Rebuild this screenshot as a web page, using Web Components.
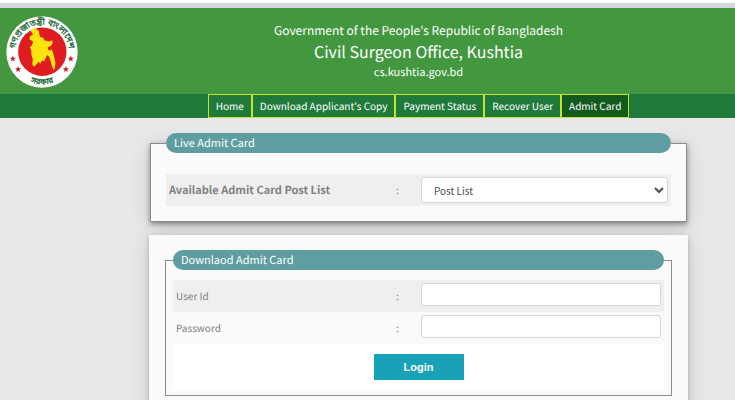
<!DOCTYPE html>
<html lang="en">
<head>
<meta charset="utf-8">
<meta name="viewport" content="width=device-width, initial-scale=1">
<title>Civil Surgeon Office, Kushtia</title>
<style>
  body {
    margin: 0;
    background: #e8e8e8;
    color: #808080;
    font-family: "Noto Sans CJK SC", "Open Sans", sans-serif;
    font-size: 10px;
    line-height: 16px;
    text-rendering: geometricPrecision;
  }
</style>
</head>
<body>

<site-header>
  <govt-logo slot="logo"></govt-logo>
  <span slot="govt">Government of the People's Republic of Bangladesh</span>
  <span slot="office">Civil Surgeon Office, Kushtia</span>
  <span slot="site">cs.kushtia.gov.bd</span>
</site-header>

<site-menu>
  <a href="#home">Home</a>
  <a href="#applicant-copy">Download Applicant's Copy</a>
  <a href="#payment">Payment Status</a>
  <a href="#recover">Recover User</a>
  <a href="#admit" class="active">Admit Card</a>
</site-menu>

<admit-page></admit-page>

<script>
class GovtLogo extends HTMLElement {
  constructor() {
    super();
    this.attachShadow({ mode: "open" });
    this.shadowRoot.innerHTML = `
  <style>
    :host { display: block; width: 72px; height: 72px; }
    svg { display: block; width: 100%; height: 100%; }
    text {
      font-family: "Noto Sans Bengali", "Lohit Bengali", "Noto Sans", sans-serif;
      font-size: 27px;
      fill: #1f6b3a;
      stroke: #1f6b3a;
      stroke-width: 1px;
    }
    .bottom { font-size: 25px; }
  </style>
  <svg viewBox="0 0 220 220" role="img" aria-label="Government seal">
    <defs>
      <path id="arc-top" d="M32 134 A82 82 0 1 1 188 134"/>
      <path id="arc-bottom" d="M40 180 A99 99 0 0 0 180 180"/>
      <path id="star" d="M0-10 L2.6-3.2 9.5-3.1 4 1.3 5.9 8.1 0 4.2-5.9 8.1-4 1.3-9.5-3.1-2.6-3.2Z"/>
    </defs>
    <circle cx="110" cy="110" r="109" fill="#fff"/>
    <circle cx="111" cy="109" r="74" fill="#e01c20"/>
    <path fill="#fbe40e" d="M75 46 L86 35 92 38 100 46 104 64 113 66 118 75 132 78 141 74 143 82 137 92 127 96 129 103 136 106 138 99 144 112 148 130 151 142 149 161 145 165 140 151 136 137 132 125 126 119 122 127 117 138 111 135 105 146 99 140 93 148 86 155 80 148 82 132 78 119 77 104 73 96 80 88 83 79 72 71 73 62 83 57Z"/>
    <text text-anchor="middle"><textPath href="#arc-top" startOffset="50%">গণপ্রজাতন্ত্রী বাংলাদেশ</textPath></text>
    <text class="bottom" text-anchor="middle"><textPath href="#arc-bottom" startOffset="50%">সরকার</textPath></text>
    <g fill="#c8202a">
      <use href="#star" x="21" y="131"/>
      <use href="#star" x="37" y="163"/>
      <use href="#star" x="198" y="131"/>
      <use href="#star" x="183" y="163"/>
    </g>
  </svg>
`;
  }
}

class SiteHeader extends HTMLElement {
  constructor() {
    super();
    this.attachShadow({ mode: "open" });
    this.shadowRoot.innerHTML = `
  <style>
    :host {
      display: block;
      background: #43983f;
      color: #fff;
      border-top: 3px solid #fff;
    }
    .strip { height: 5px; background: #d6d8e0; }
    header { display: flex; padding: 8px 0 6px; }
    .logo { width: 96px; padding-left: 6px; }
    .titles {
      flex: 1;
      display: flex;
      flex-direction: column;
      align-items: center;
      padding-top: 6px;
    }
    .govt { font-size: 12px; line-height: 18px; }
    .office { font-size: 16px; line-height: 22px; }
    .site { font-size: 11px; line-height: 20px; }
  </style>
  <div class="strip"></div>
  <header>
    <div class="logo"><slot name="logo"></slot></div>
    <div class="titles">
      <div class="govt"><slot name="govt"></slot></div>
      <div class="office"><slot name="office"></slot></div>
      <div class="site"><slot name="site"></slot></div>
    </div>
  </header>
`;
  }
}

class SiteMenu extends HTMLElement {
  constructor() {
    super();
    this.attachShadow({ mode: "open" });
    this.shadowRoot.innerHTML = `
  <style>
    :host { display: block; background: #1f7a3c; }
    nav {
      display: flex;
      justify-content: center;
      padding-left: 102px;
    }
    ::slotted(a) {
      padding: 3px 7px;
      border: 1px solid #c4e32a;
      color: #fff;
      text-decoration: none;
      white-space: nowrap;
    }
    ::slotted(a.active) { background: #135a1f; }
  </style>
  <nav><slot></slot></nav>
`;
  }
}

class FormPanel extends HTMLElement {
  constructor() {
    super();
    this.attachShadow({ mode: "open" });
    this.shadowRoot.innerHTML = `
  <style>
    :host { display: block; }
    fieldset {
      min-width: 0;
      margin: 0;
      padding: var(--panel-padding, 10px 7px 5px);
      border: 1px solid #8c8c8c;
      background: #fafafa;
      box-shadow: var(--panel-shadow, none);
    }
    legend {
      box-sizing: border-box;
      width: 100%;
      padding: 0 8px;
      border-radius: 10px;
      background: #5f9ea0;
      color: #fff;
      font-size: 11px;
      line-height: 20px;
    }
  </style>
  <fieldset>
    <legend></legend>
    <slot></slot>
  </fieldset>
`;
    this.shadowRoot.querySelector("legend").textContent = this.getAttribute("heading");
  }
}

class FormRow extends HTMLElement {
  constructor() {
    super();
    this.attachShadow({ mode: "open" });
    this.shadowRoot.innerHTML = `
  <style>
    :host {
      display: grid;
      grid-template-columns: 1fr 25px 49.5%;
      align-items: center;
      box-sizing: border-box;
      height: 32px;
      padding: 0 3px;
    }
    :host([shaded]) { background: #efefef; }
    ::slotted(input), ::slotted(select) {
      box-sizing: border-box;
      width: 100%;
      height: 23px;
      margin: 0;
      padding: 0 8px;
      border: 1px solid #d4d7da;
      border-radius: 3px;
      background: #fff;
      color: #495057;
      font: inherit;
    }
    ::slotted(select) { height: 26px; }
    ::slotted(input) { align-self: start; margin-top: 3px; }
  </style>
  <slot name="label"></slot>
  <span>:</span>
  <slot name="control"></slot>
`;
  }
}

class AdmitPage extends HTMLElement {
  constructor() {
    super();
    this.attachShadow({ mode: "open" });
    this.shadowRoot.innerHTML = `
  <style>
    :host { display: block; }
    main {
      display: flex;
      flex-direction: column;
      gap: 13px;
      padding: 15px 47px 24px 149px;
    }
    .live {
      margin: 0 1px;
      --panel-padding: 21px 15px 15px;
      --panel-shadow: 0 2px 5px rgba(0, 0, 0, .4), 0 4px 20px rgba(0, 0, 0, .14);
    }
    .live label { font-size: 11px; font-weight: bold; }
    .login {
      padding: 15px 16px 24px;
      background: #fafafa;
      box-shadow: 0 2px 5px rgba(0, 0, 0, .2), 0 4px 20px rgba(0, 0, 0, .14);
    }
    .actions {
      display: flex;
      justify-content: center;
      padding: 10px 0;
      background: #fff;
    }
    button {
      width: 90px;
      height: 26px;
      padding: 0;
      border: 0;
      background: #17a2b8;
      color: #fff;
      font: bold 11px "Liberation Sans", sans-serif;
    }
  </style>
  <main>
    <form-panel class="live" heading="Live Admit Card">
      <form-row shaded>
        <label slot="label" for="post">Available Admit Card Post List</label>
        <select slot="control" id="post"><option>Post List</option></select>
      </form-row>
    </form-panel>
    <form class="login">
      <form-panel heading="Downlaod Admit Card">
        <form-row shaded>
          <label slot="label" for="user">User Id</label>
          <input slot="control" id="user" type="text">
        </form-row>
        <form-row>
          <label slot="label" for="password">Password</label>
          <input slot="control" id="password" type="password">
        </form-row>
        <div class="actions"><button type="submit">Login</button></div>
      </form-panel>
    </form>
  </main>
`;
  }
}

customElements.define("govt-logo", GovtLogo);
customElements.define("site-header", SiteHeader);
customElements.define("site-menu", SiteMenu);
customElements.define("form-panel", FormPanel);
customElements.define("form-row", FormRow);
customElements.define("admit-page", AdmitPage);
</script>
</body>
</html>
